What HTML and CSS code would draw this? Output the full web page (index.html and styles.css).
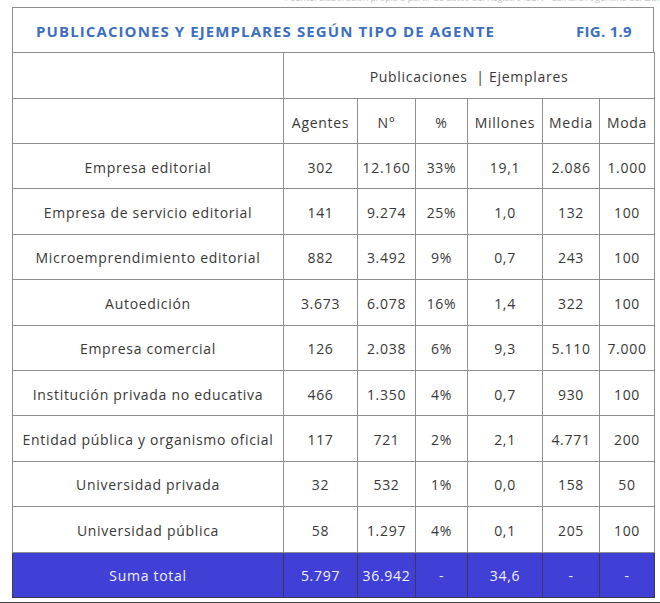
FILE: index.html
```html
<!DOCTYPE html>
<html lang="es">
<head>
<meta charset="utf-8">
<link rel="stylesheet" href="styles.css">
</head>
<body>
<div class="topstrip"><span class="ghost">Fuente: elaboración propia a partir de datos del Registro ISBN · Cámara Argentina del Libro · 2019</span></div>
<div class="figure">
  <div class="title-row">
    <span class="title">PUBLICACIONES Y EJEMPLARES SEGÚN TIPO DE AGENTE</span>
    <span class="fig">FIG. 1.9</span>
  </div>
  <table class="data">
    <colgroup>
      <col class="c-label"><col class="c-ag"><col class="c-n"><col class="c-pct"><col class="c-mill"><col class="c-media"><col class="c-moda">
    </colgroup>
    <tr class="h1"><td></td><td colspan="6">Publicaciones &nbsp;| Ejemplares</td></tr>
    <tr class="h2"><td></td><td>Agentes</td><td>N°</td><td>%</td><td>Millones</td><td>Media</td><td>Moda</td></tr>
    <tr><td>Empresa editorial</td><td>302</td><td>12.160</td><td>33%</td><td>19,1</td><td>2.086</td><td>1.000</td></tr>
    <tr><td>Empresa de servicio editorial</td><td>141</td><td>9.274</td><td>25%</td><td>1,0</td><td>132</td><td>100</td></tr>
    <tr><td>Microemprendimiento editorial</td><td>882</td><td>3.492</td><td>9%</td><td>0,7</td><td>243</td><td>100</td></tr>
    <tr><td>Autoedición</td><td>3.673</td><td>6.078</td><td>16%</td><td>1,4</td><td>322</td><td>100</td></tr>
    <tr><td>Empresa comercial</td><td>126</td><td>2.038</td><td>6%</td><td>9,3</td><td>5.110</td><td>7.000</td></tr>
    <tr><td>Institución privada no educativa</td><td>466</td><td>1.350</td><td>4%</td><td>0,7</td><td>930</td><td>100</td></tr>
    <tr><td>Entidad pública y organismo oficial</td><td>117</td><td>721</td><td>2%</td><td>2,1</td><td>4.771</td><td>200</td></tr>
    <tr><td>Universidad privada</td><td>32</td><td>532</td><td>1%</td><td>0,0</td><td>158</td><td>50</td></tr>
    <tr><td>Universidad pública</td><td>58</td><td>1.297</td><td>4%</td><td>0,1</td><td>205</td><td>100</td></tr>
    <tr class="total"><td>Suma total</td><td>5.797</td><td>36.942</td><td>-</td><td>34,6</td><td>-</td><td>-</td></tr>
  </table>
</div>
<div class="bottom-rule"></div>
</body>
</html>
```

FILE: styles.css
```css
html, body {
  margin: 0;
  padding: 0;
  background: #ffffff;
}
body {
  font-family: "Open Sans", "Noto Sans", sans-serif;
  color: #383838;
  width: 660px;
  height: 603px;
  overflow: hidden;
}
.topstrip {
  height: 7px;
  overflow: hidden;
  padding-left: 285px;
  white-space: nowrap;
}
.ghost {
  display: block;
  margin-top: -7px;
  font-size: 9px;
  line-height: 10px;
  color: #c4c4c4;
}
.figure {
  margin-left: 12px;
  width: 642px;
}
.title-row {
  height: 44px;
  border: 1px solid #8e8e8e;
  border-bottom: none;
  display: flex;
  align-items: center;
  justify-content: space-between;
  padding: 2px 21px 0 23px;
  box-sizing: border-box;
  height: 45px;
  color: #3c6fc2;
  font-weight: 700;
  font-size: 15px;
}
.title { letter-spacing: 1.1px; }
.fig { letter-spacing: 0.3px; }
.data {
  width: 642px;
  table-layout: fixed;
  border-collapse: collapse;
  font-size: 14px;
  letter-spacing: 0.7px;
}
.c-label { width: 271px; }
.c-ag { width: 74px; }
.c-n { width: 58px; }
.c-pct { width: 52px; }
.c-mill { width: 75px; }
.c-media { width: 57px; }
.c-moda { width: 55px; }
.data td {
  border: 1px solid #8e8e8e;
  height: 44.4px;
  padding: 2px 0 0;
  box-sizing: border-box;
  text-align: center;
  vertical-align: middle;
  white-space: nowrap;
}
.data tr.h1 td { height: 46px; }
.data tr.h2 td { height: 45px; }
.data tr td { height: 45.4px; }
.data tr.h1 td { height: 46px; }
.data tr.h2 td { height: 45px; }
.data tr.total td {
  background: #4040d6;
  color: #f0f0ff;
  border-color: #3a3a52;
}
.bottom-rule {
  margin-top: 4px;
  height: 3px;
  background: #454545;
}
```
